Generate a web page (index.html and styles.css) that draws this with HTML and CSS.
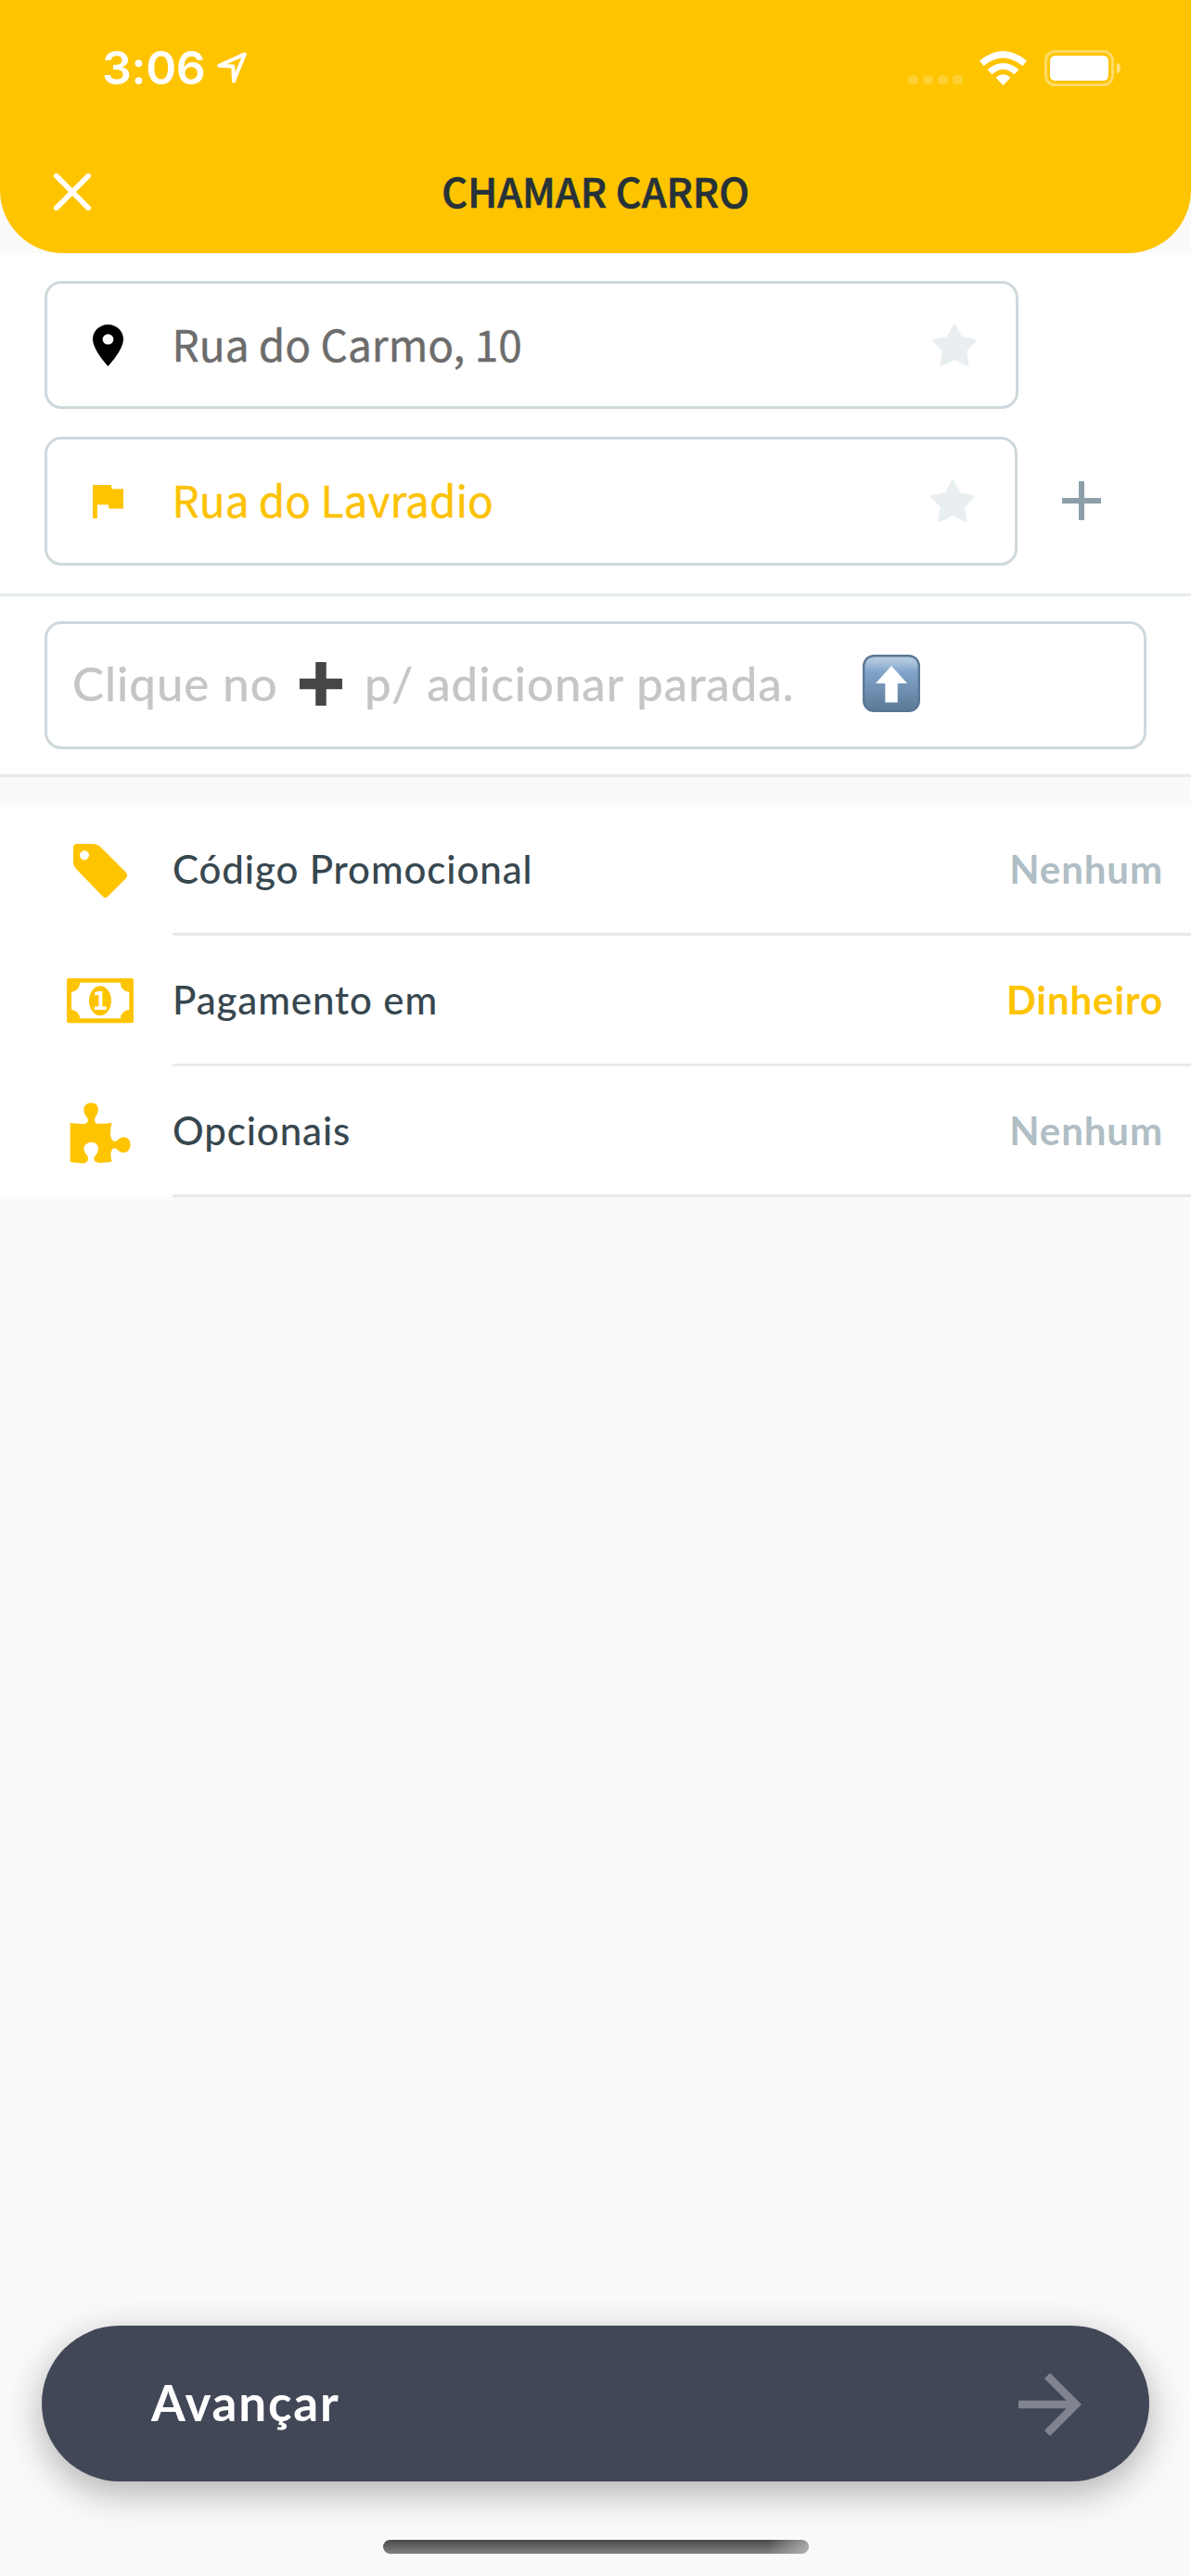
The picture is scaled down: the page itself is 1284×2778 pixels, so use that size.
FILE: index.html
```html
<!DOCTYPE html>
<html lang="pt-BR">
<head>
<meta charset="utf-8">
<title>Chamar carro</title>
<link rel="stylesheet" href="styles.css">
</head>
<body>
<div class="screen">
  <header class="header">
    <div class="status">
      <span class="time">3:06</span>
      <svg class="location" viewBox="0 0 32 34"><path d="M29.8 2.4L2.2 14.8L17.3 15.4L18 31.4Z" fill="none" stroke="#fff" stroke-width="4" stroke-linejoin="round"/></svg>
      <div class="signal"><i></i><i></i><i></i><i></i></div>
      <svg class="wifi" viewBox="0 0 51 37" fill="#fff"><path d="M0 10.5Q25.5 -10.5 51 10.5L46.5 16Q25.5 -1 4.5 16Z"/><path d="M8.6 20Q25.5 6 42.4 20L37.5 25.3Q25.5 14 13.5 25.3Z"/><path d="M17.6 28.7Q25.5 22 33.4 28.7L25.5 37Z"/></svg>
      <svg class="battery" viewBox="0 0 82 39"><rect x="1.5" y="1.5" width="72" height="36" rx="10" fill="none" stroke="#fff" stroke-opacity=".4" stroke-width="3"/><rect x="6" y="6" width="63" height="27" rx="5.5" fill="#fff"/><path d="M78 13.5Q82 15 82 19.5T78 25.5Z" fill="#fff" fill-opacity=".5"/></svg>
    </div>
    <div class="nav">
      <svg class="close" viewBox="0 0 40 40"><path d="M2.8 2.8L37.2 37.2M37.2 2.8L2.8 37.2" stroke="#fff" stroke-width="5.6" stroke-linecap="round"/></svg>
      <h1 class="title">CHAMAR CARRO</h1>
    </div>
  </header>

  <section class="route">
    <div class="field origin">
      <svg class="pin" viewBox="5 2 14 20" preserveAspectRatio="none"><path d="M12 2C8.13 2 5 5.13 5 9c0 5.25 7 13 7 13s7-7.75 7-13c0-3.87-3.13-7-7-7zm0 9.6a2.5 2.5 0 0 1 0-5 2.5 2.5 0 0 1 0 5z"/></svg>
      <span class="address">Rua do Carmo, 10</span>
      <svg class="star" viewBox="0 0 48 46"><path d="M24 1L31.3 15L47 18L36.2 29.5L38.5 45L24 38L9.5 45L11.8 29.5L1 18L16.7 15Z"/></svg>
    </div>
    <div class="destination-row">
      <div class="field destination">
        <svg class="flag" viewBox="5 4 15 17" preserveAspectRatio="none"><path d="M14.4 6L14 4H5v17h2.2v-7h5.4l.4 2h7V6z" fill="#ffc400"/></svg>
        <span class="address">Rua do Lavradio</span>
        <svg class="star" viewBox="0 0 48 46"><path d="M24 1L31.3 15L47 18L36.2 29.5L38.5 45L24 38L9.5 45L11.8 29.5L1 18L16.7 15Z"/></svg>
      </div>
      <svg class="add" viewBox="0 0 42 42"><path d="M0 21H42M21 0V42" stroke="#8c9fa8" stroke-width="6"/></svg>
    </div>
  </section>

  <section class="hint">
    <div class="hint-box">
      <span class="hint-start">Clique no</span>
      <svg class="plus" viewBox="0 0 46 47"><path d="M0 23.5H46M23 0V47" stroke="#464646" stroke-width="11.5"/></svg>
      <span class="hint-end">p/ adicionar parada.</span>
      <svg class="up" viewBox="0 0 62 62">
        <defs>
          <linearGradient id="key" x1="0" y1="0" x2="0" y2="1"><stop offset="0" stop-color="#b9cee2"/><stop offset=".12" stop-color="#a9c3dc"/><stop offset=".3" stop-color="#7fa3c9"/><stop offset=".6" stop-color="#7191b3"/><stop offset="1" stop-color="#5b7893"/></linearGradient>
        </defs>
        <rect x="1.2" y="1.2" width="59.6" height="59.6" rx="11" fill="url(#key)" stroke="#5a7896" stroke-width="2.4"/>
        <path d="M31 12L48 31H37.7V51.5H24.3V31H14Z" fill="#fff"/>
      </svg>
    </div>
  </section>

  <section class="options">
    <div class="option">
      <div class="icon"><svg class="tag" viewBox="0 0 58 58"><path fill="#ffc400" fill-rule="evenodd" d="M4 0H21Q26 0 30 4L57 31Q59.5 34 57 37L37.5 56.5Q34.5 59.5 31.5 56.5L4 28Q0 24 0 20V4Q0 0 4 0ZM12 7.3a5 5 0 1 0 .01 0Z"/></svg></div>
      <div class="line"><span>Código Promocional</span><b>Nenhum</b></div>
    </div>
    <div class="option">
      <div class="icon"><svg class="money" viewBox="36 44 216 145"><rect x="36" y="44" width="216" height="145" rx="6" fill="#ffc400"/><path fill="#fff" d="M78 58H210A28 28 0 0 0 238 88V146A28 28 0 0 0 210 174H78A28 28 0 0 0 51 146V88A28 28 0 0 0 78 58Z"/><ellipse cx="144" cy="117" rx="36" ry="48" fill="#ffc400"/><text class="one" x="144" y="147" text-anchor="middle">1</text></svg></div>
      <div class="line"><span>Pagamento em</span><b class="active">Dinheiro</b></div>
    </div>
    <div class="option">
      <div class="icon"><svg class="puzzle" viewBox="45 444 198 198"><path fill="#ffc400" d="M47 510Q75 514 95 513Q108 508 103 494Q91 480 91 468Q92 445 115 445Q137 446 138 467Q137 480 128 491Q122 508 134 512Q155 514 181 509Q177 530 177 548Q181 572 196 569Q208 556 222 556Q242 560 242 581Q240 604 220 606Q207 605 196 593Q181 588 178 610Q178 625 182 635Q165 637 143 639Q122 639 124 622Q138 606 138 592Q136 572 115 572Q92 574 91 594Q92 606 102 615Q110 632 96 640Q70 641 47 636Z"/></svg></div>
      <div class="line"><span>Opcionais</span><b>Nenhum</b></div>
    </div>
  </section>

  <footer class="footer">
    <button class="next">
      <span>Avançar</span>
      <svg class="arrow" viewBox="4 4 16 16"><path fill="#80848f" d="M12 4l-1.41 1.41L16.17 11H4v2h12.17l-5.58 5.59L12 20l8-8z"/></svg>
    </button>
    <div class="home"></div>
  </footer>
</div>
</body>
</html>
```
FILE: styles.css
```css
* { box-sizing: border-box; }

body {
  margin: 0;
  background: #fafafa;
  font-family: Lato, "Open Sans", sans-serif;
}

svg { display: block; flex: none; }

.screen {
  width: 1284px;
  height: 2778px;
  display: flex;
  flex-direction: column;
}

/* Header */
.header {
  height: 273px;
  background: #ffc400;
  border-radius: 0 0 68px 68px;
}

.status {
  height: 146px;
  padding: 0 76px 0 110px;
  display: flex;
  align-items: center;
}

.time {
  width: 124px;
  font: 600 50px/60px Inter, sans-serif;
  letter-spacing: -.3px;
  color: #fff;
}

.location { width: 32px; height: 34px; }

.signal {
  display: flex;
  gap: 5.5px;
  margin: 26px 18.5px 0 auto;
}

.signal i {
  width: 10.5px;
  height: 10px;
  border-radius: 4px;
  background: rgba(255, 255, 255, .2);
}

.wifi { width: 51px; height: 37px; margin-right: 19px; }
.battery { width: 82px; height: 39px; }

.signal + .wifi { margin-left: 0; }

.nav {
  height: 127px;
  padding: 0 58px 9px;
  display: grid;
  grid-template-columns: 40px 1fr 40px;
  align-items: center;
}

.close { width: 40px; height: 40px; margin-top: 4px; }

.title {
  margin: 0;
  text-align: center;
  font: 500 43.2px/60px "Noto Sans CJK SC", sans-serif;
  -webkit-text-stroke: .7px #263238;
  color: #263238;
}

/* Route fields */
.route {
  height: 370px;
  padding: 30px 0 0 48px;
  background: #fff;
  border-bottom: 3px solid #e5eaed;
}

.field {
  display: flex;
  align-items: center;
  border: 3px solid #cfd8dc;
  border-radius: 18px;
  padding-left: 49px;
}

.origin { width: 1050px; height: 138px; padding-right: 42px; }
.destination { width: 1049px; height: 139px; padding-right: 43px; }

.destination-row {
  display: flex;
  align-items: center;
  gap: 48px;
  margin-top: 30px;
}

.pin { width: 33px; height: 45px; }
.flag { width: 33px; height: 36px; }

.address {
  flex: 1;
  padding: 0 0 5px 52.5px;
  font: 400 46px/66px "Noto Sans CJK SC", sans-serif;
  -webkit-text-stroke: .4px;
  color: #6c6c6c;
}

.destination .address { color: #fcc204; }

.star {
  width: 48px;
  height: 46px;
  fill: #e9eff1;
  stroke: #e9eff1;
  stroke-width: 2;
  stroke-linejoin: round;
}

.destination .star,
.add { margin-bottom: 2px; }

.add { width: 42px; height: 42px; }

/* Stop hint */
.hint {
  height: 195px;
  padding: 27px 48px 0;
  background: #fff;
  border-bottom: 3px solid #e5eaed;
}

.hint-box {
  height: 138px;
  padding-left: 27px;
  display: flex;
  align-items: center;
  border: 3px solid #cfd8dc;
  border-radius: 18px;
  font-size: 51px;
  line-height: 60px;
  letter-spacing: 1px;
  -webkit-text-stroke: .4px;
  color: #c5c5c7;
  white-space: nowrap;
}

.hint-start { width: 245px; padding-bottom: 5px; }
.plus { width: 46px; height: 47px; margin: 0 24px 4px 0; }
.hint-end { width: 537px; padding-bottom: 5px; }
.up { width: 62px; height: 62px; margin-bottom: 4px; }

/* Option list */
.options {
  margin-top: 30px;
  background: #fff;
}

.option {
  height: 141px;
  display: flex;
}

.icon {
  width: 186px;
  padding-left: 30px;
  display: flex;
  align-items: center;
  justify-content: center;
}

.tag { width: 58px; height: 58px; }
.money { width: 72px; height: 48.3px; }
.puzzle { width: 66px; height: 66px; margin-top: 2px; }

.one {
  font: 700 82px "DejaVu Sans Mono", monospace;
  fill: #fff;
}

.line {
  flex: 1;
  display: flex;
  align-items: center;
  justify-content: space-between;
  padding: 0 30px 1px 0;
  border-bottom: 3px solid #e5eaed;
  font-size: 42px;
  font-weight: 500;
  letter-spacing: .9px;
  color: #37474f;
}

.line b { font-weight: 700; color: #b0bec5; }
.line .active { color: #ffc400; }

/* Bottom action */
.footer {
  margin-top: auto;
  padding: 0 45px 24px;
}

.next {
  width: 100%;
  height: 168px;
  padding: 0 73px 0 118px;
  display: flex;
  align-items: center;
  justify-content: space-between;
  border: 0;
  border-radius: 84px;
  background: #424757;
  box-shadow: 0 12px 42px rgba(0, 0, 0, .3);
  font: 700 53px/64px Lato, sans-serif;
  letter-spacing: 1.8px;
  color: #fff;
}

.next span { padding-bottom: 3px; }
.arrow { width: 68px; height: 68px; margin-top: 2px; }

.home {
  width: 459px;
  height: 15px;
  margin: 63px auto 0;
  border-radius: 7.5px;
  background:
    linear-gradient(105deg, rgba(190, 190, 190, 0) 90%, rgba(190, 190, 190, .8)),
    linear-gradient(#4a4a4a, #818181);
}
```
